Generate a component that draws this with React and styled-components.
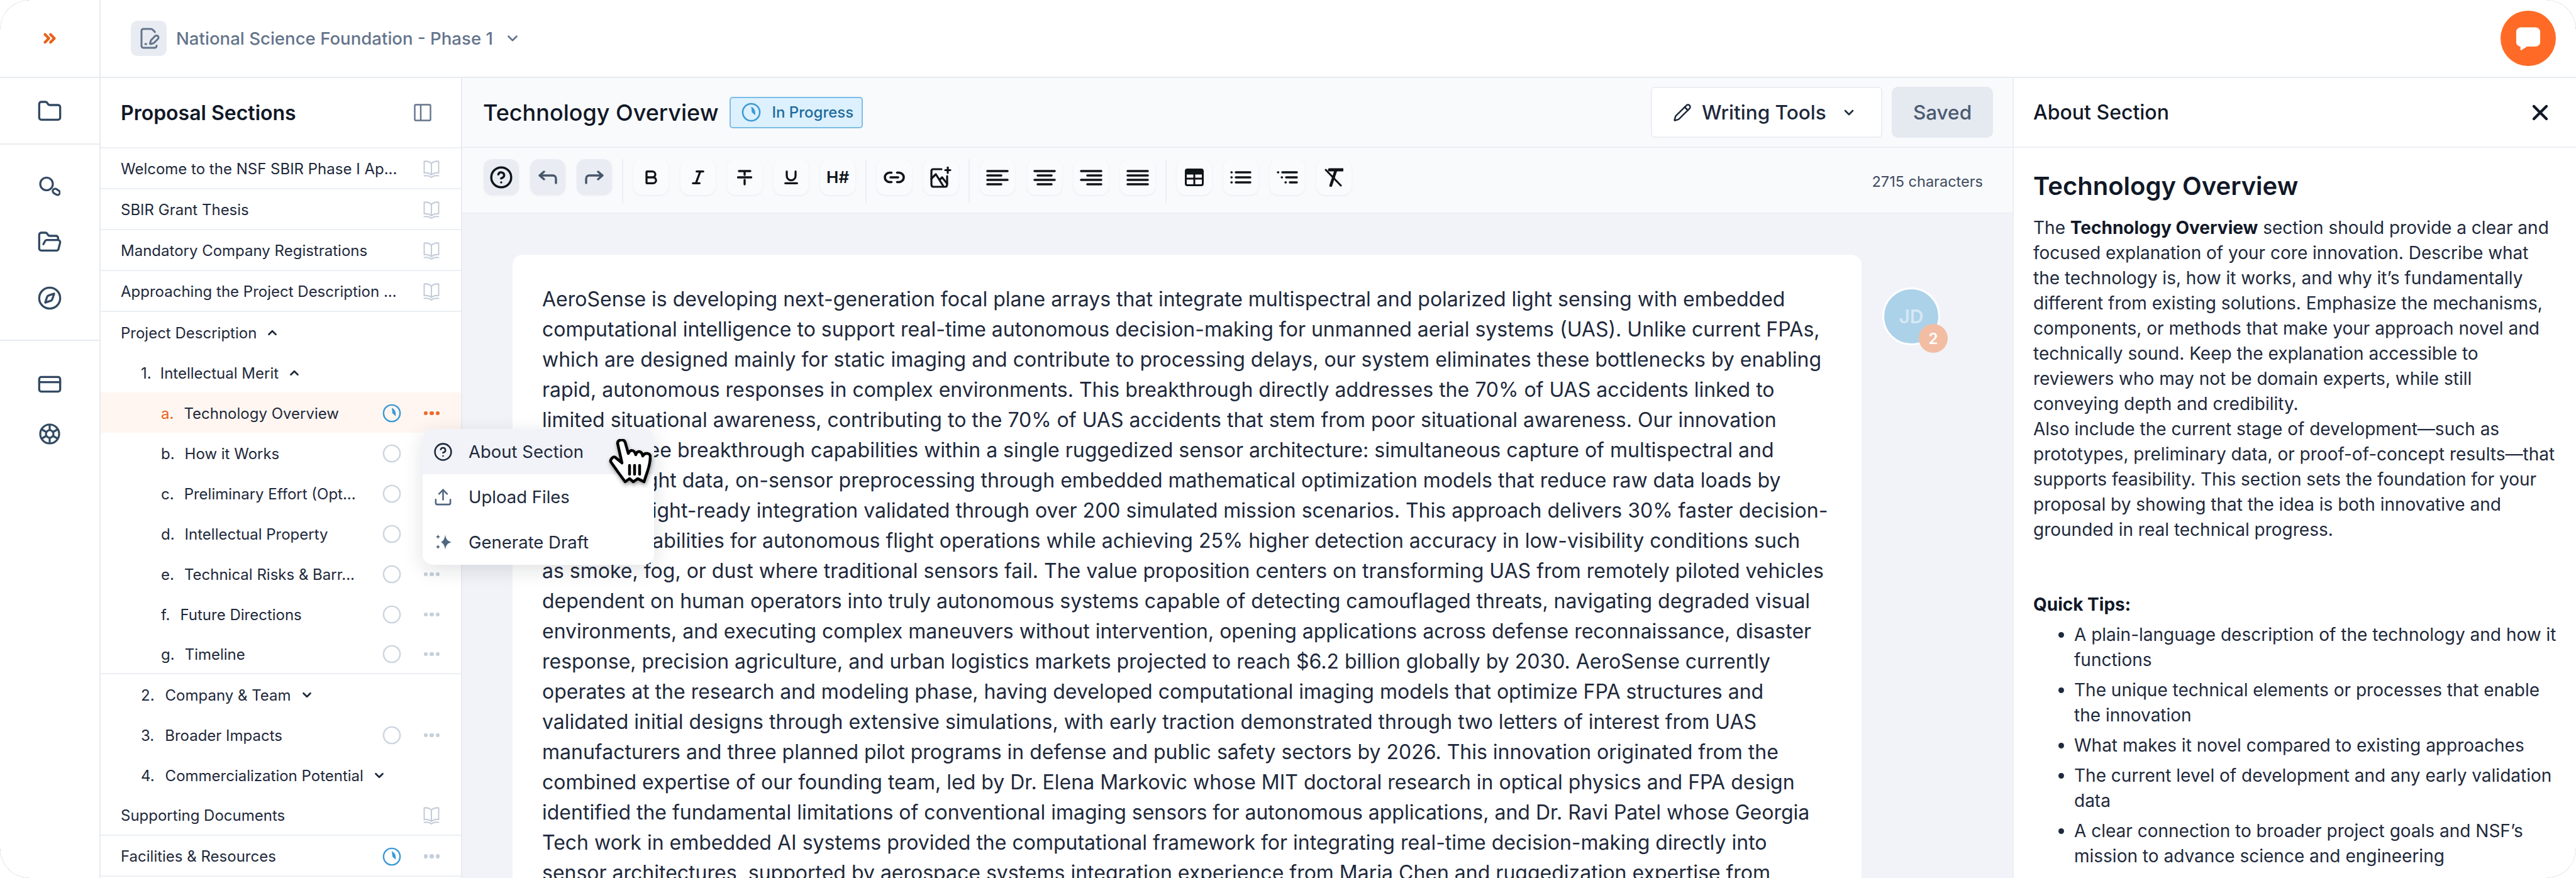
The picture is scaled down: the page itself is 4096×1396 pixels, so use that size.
import React from 'react';
import styled, { createGlobalStyle } from 'styled-components';
import {
  ChevronsRight,
  ChevronDown,
  ChevronUp,
  Folder,
  FolderOpen,
  Compass,
  CreditCard,
  FilePenLine,
  CircleHelp,
  Bold,
  Italic,
  Underline,
  Link2,
  Pencil,
  X,
  Upload,
} from 'lucide-react';

const GlobalStyle = createGlobalStyle`
  html, body {
    margin: 0;
    padding: 0;
    background: #fff;
  }
  * {
    box-sizing: border-box;
  }
  body {
    font-family: Inter, "Noto Sans", sans-serif;
    color: #1e293b;
  }
`;

const Frame = styled.div`
  position: relative;
  width: 4096px;
  height: 1396px;
  overflow: hidden;
  display: grid;
  grid-template-columns: 160px 1fr;
  background: #fff;
`;

const Corner = styled.span`
  position: absolute;
  width: 46px;
  height: 46px;
  z-index: 5;
  border: 0 dotted #c4c8ce;
  ${p => p.$y}: 0;
  ${p => p.$x}: 0;
  border-${p => p.$y}-width: 1px;
  border-${p => p.$x}-width: 1px;
  border-${p => p.$y}-${p => p.$x}-radius: 46px;
`;

const Rail = styled.nav`
  display: flex;
  flex-direction: column;
  border-right: 2px solid #e8ebf0;
  color: #334a63;
`;

const RailTop = styled.div`
  height: 124px;
  display: flex;
  align-items: center;
  justify-content: center;
  border-bottom: 2px solid #e8ebf0;
  color: #e8611a;
`;

const RailGroup = styled.div`
  display: flex;
  flex-direction: column;
  align-items: center;
  height: ${p => p.$height};
  padding-top: ${p => p.$top}px;
  gap: ${p => p.$gap}px;
  border-bottom: ${p => (p.$last ? '0' : '2px solid #e8ebf0')};
`;

const Content = styled.div`
  display: flex;
  flex-direction: column;
  min-width: 0;
  height: 1396px;
`;

const TopBar = styled.header`
  height: 124px;
  flex: none;
  display: flex;
  align-items: center;
  padding-left: 48px;
  border-bottom: 2px solid #e8ebf0;
  position: relative;
`;

const DocBadge = styled.span`
  width: 57px;
  height: 56px;
  border-radius: 10px;
  background: #e8ecf2;
  color: #64748b;
  display: flex;
  align-items: center;
  justify-content: center;
  margin-right: 15px;
`;

const ProjectName = styled.span`
  font-size: 27.6px;
  font-weight: 500;
  color: #64748b;
  margin-right: 18px;
`;

const ChatButton = styled.button`
  position: absolute;
  right: 32px;
  top: 17px;
  width: 88px;
  height: 88px;
  border: 0;
  border-radius: 50%;
  background: #ff6b26;
  display: flex;
  align-items: center;
  justify-content: center;
  padding: 0;
`;

const Body = styled.div`
  position: relative;
  flex: 1;
  display: flex;
  min-height: 0;
`;

const Sidebar = styled.aside`
  width: 575px;
  flex: none;
  border-right: 2px solid #e8ebf0;
  background: #fff;
`;

const SidebarHead = styled.div`
  height: 112px;
  display: flex;
  align-items: center;
  justify-content: space-between;
  padding: 0 47px 0 32px;
  border-bottom: 2px solid #eceff3;
`;

const SidebarTitle = styled.h2`
  margin: 0;
  font-size: 32px;
  font-weight: 600;
  color: #111827;
`;

const Row = styled.div`
  height: ${p => (p.$plain ? 64 : 65)}px;
  display: flex;
  align-items: center;
  padding-left: ${p => 32 + p.$depth * 32}px;
  padding-right: 34px;
  padding-top: 2px;
  font-size: 24px;
  color: #1e293b;
  white-space: nowrap;
  background: ${p => (p.$active ? '#fff6f1' : 'transparent')};
  border-bottom: ${p => (p.$line ? '2px solid #eceff3' : '0')};
`;

const Marker = styled.span`
  margin-right: ${p => p.$gap}px;
  color: ${p => (p.$active ? '#e8611a' : 'inherit')};
`;

const RowCaret = styled.span`
  display: inline-flex;
  margin-left: 14px;
  color: #1e293b;
`;

const RowTail = styled.span`
  margin-left: auto;
  display: flex;
  align-items: center;
  gap: 36px;
`;

const Dots = styled.span`
  display: flex;
  gap: 3px;
  width: 25px;
  i {
    width: 6.5px;
    height: 6.5px;
    border-radius: 50%;
    background: ${p => (p.$active ? '#ea6a2c' : '#c6cfda')};
  }
`;

const Main = styled.main`
  flex: 1;
  min-width: 0;
  display: flex;
  flex-direction: column;
  background: #f1f3f8;
`;

const MainHead = styled.div`
  height: 111px;
  flex: none;
  background: #f9fafc;
  display: flex;
  align-items: center;
  padding: 0 31px 0 33px;
  border-bottom: 2px solid #eceff3;
`;

const MainTitle = styled.h1`
  margin: 0 18px 0 0;
  font-size: 36px;
  font-weight: 500;
  color: #111827;
`;

const StatusBadge = styled.span`
  height: 50px;
  width: 212px;
  display: flex;
  align-items: center;
  gap: 17px;
  padding-left: 17px;
  border: 2px solid #7cbde6;
  border-radius: 5px;
  background: #dcf0fd;
  color: #1d6a9c;
  font-size: 24px;
  font-weight: 500;
`;

const HeadActions = styled.div`
  margin-left: auto;
  display: flex;
  gap: 15px;
`;

const WritingButton = styled.button`
  width: 368px;
  height: 81px;
  background: #fff;
  border: 2px solid #eceef2;
  border-radius: 6px;
  display: flex;
  align-items: center;
  padding-left: 33px;
  font: 500 31.5px Inter, sans-serif;
  color: #1e293b;
`;

const WritingLabel = styled.span`
  margin: 0 24px 0 16px;
`;

const SavedButton = styled.button`
  width: 161px;
  height: 81px;
  border: 0;
  border-radius: 10px;
  background: #e5e9f0;
  color: #4b5a70;
  font: 500 31.5px Inter, sans-serif;
`;

const Toolbar = styled.div`
  height: 105px;
  flex: none;
  background: #f9fafc;
  display: flex;
  align-items: flex-start;
  padding: 18px 47px 0 34px;
  border-bottom: 2px solid #eceff3;
`;

const ToolGroup = styled.div`
  display: flex;
  gap: 18.2px;
`;

const ToolDivider = styled.span`
  width: 2px;
  height: 70px;
  background: #eceff3;
  margin: 0 16px;
`;

const ToolButton = styled.button`
  width: 56px;
  height: 57px;
  padding: 0;
  border: 0;
  border-radius: 14px;
  background: ${p => (p.$filled ? '#e9edf3' : '#fafbfd')};
  box-shadow: 0 1px 3px rgba(30, 41, 59, 0.08);
  color: ${p => p.$color || '#0f1419'};
  display: flex;
  align-items: center;
  justify-content: center;
  font: 600 26px Inter, sans-serif;
`;

const CharCount = styled.span`
  margin-left: auto;
  margin-top: 21px;
  font-size: 23.5px;
  color: #3d4b5f;
`;

const EditorArea = styled.div`
  flex: 1;
  min-height: 0;
  display: flex;
  align-items: flex-start;
  padding: 65px 0 0 80px;
  overflow: hidden;
`;

const EditorCard = styled.article`
  width: 2145px;
  flex: none;
  min-height: 1000px;
  background: #fff;
  border-radius: 16px 16px 0 0;
  padding: 47px 51px 0 47px;
  font-size: 32px;
  line-height: 48px;
  color: #1e293b;
`;

const Avatar = styled.div`
  position: relative;
  margin: 52px 0 0 33px;
  width: 92px;
  height: 92px;
  border-radius: 50%;
  border: 3px solid #fff;
  background: #acd2ea;
  color: rgba(255, 255, 255, 0.5);
  font-size: 30px;
  font-weight: 600;
  display: flex;
  align-items: center;
  justify-content: center;
`;

const AvatarCount = styled.span`
  position: absolute;
  right: -15px;
  bottom: -15px;
  width: 46px;
  height: 46px;
  border-radius: 50%;
  background: #f2bda3;
  color: #fff;
  font-size: 24px;
  font-weight: 600;
  display: flex;
  align-items: center;
  justify-content: center;
`;

const AboutPanel = styled.section`
  width: 896px;
  flex: none;
  background: #fff;
  border-left: 2px solid #eceff3;
  overflow: hidden;
`;

const AboutHead = styled.div`
  height: 111px;
  display: flex;
  align-items: center;
  justify-content: space-between;
  padding: 0 37px 0 31px;
  border-bottom: 2px solid #eceff3;
  font-size: 32px;
  font-weight: 500;
  color: #111827;
`;

const AboutBody = styled.div`
  padding: 36px 32px 0 31px;
  font-size: 28px;
  line-height: 40px;
  color: #1e293b;
`;

const AboutTitle = styled.h3`
  margin: 0 0 21px;
  font-size: 40px;
  line-height: 50px;
  font-weight: 600;
  color: #111827;
`;

const AboutText = styled.p`
  margin: 0;
  strong {
    font-weight: 700;
    color: #111827;
  }
`;

const TipsTitle = styled.p`
  margin: 79px 0 8px;
  font-weight: 700;
  color: #111827;
`;

const TipsList = styled.ul`
  margin: 0 -14px 0 0;
  padding: 0 0 0 65px;
  li {
    margin-bottom: 8px;
  }
`;

const Menu = styled.div`
  position: absolute;
  left: 512px;
  top: 558px;
  width: 368px;
  height: 216px;
  background: #fff;
  border-radius: 16px;
  box-shadow: 0 8px 32px rgba(15, 23, 42, 0.13);
  overflow: hidden;
  z-index: 3;
`;

const MenuItem = styled.div`
  height: 72px;
  display: flex;
  align-items: center;
  gap: 25px;
  padding-left: 17px;
  font-size: 27.5px;
  color: #1e293b;
  background: ${p => (p.$hover ? '#f1f3f8' : 'transparent')};
`;

const MenuIcon = styled.span`
  width: 31px;
  display: flex;
  justify-content: center;
  color: ${p => (p.$dark ? '#1e293b' : '#4f6680')};
`;

const Cursor = styled.svg`
  position: absolute;
  left: 968px;
  top: 698px;
  z-index: 4;
  filter: drop-shadow(1px 3px 3px rgba(0, 0, 0, 0.4));
`;

const BookIcon = () => (
  <svg width="26" height="28" viewBox="0 0 26 28" fill="none" stroke="#c3ccd8" strokeWidth="2" strokeLinejoin="round" strokeLinecap="round">
    <path d="M13 5C10 2 6 1 1.5 1.5V20C6 19.5 10 20.5 13 23C16 20.5 20 19.5 24.5 20V1.5C20 1 16 2 13 5ZM13 5V23" />
    <path d="M1.5 24.5C6 24 10 24.5 13 27C16 24.5 20 24 24.5 24.5" />
  </svg>
);

const StatusIcon = ({ progress, size = 30 }) => (
  <svg width={size} height={size} viewBox="0 0 32 32" fill="none">
    <circle cx="16" cy="16" r="14" stroke={progress ? '#3c9ad4' : '#cdd5df'} strokeWidth="2.6" />
    {progress && <path d="M16 7C21 9 23.5 14 22.5 21L17 16Z" fill="#3c9ad4" />}
  </svg>
);

const PanelIcon = () => (
  <svg width="28" height="28" viewBox="0 0 28 28" fill="none" stroke="#64748b" strokeWidth="2.4">
    <rect x="1.5" y="1.5" width="25" height="25" rx="1.5" />
    <path d="M11 1.5V26.5" />
  </svg>
);

const SearchIcon = () => (
  <svg width="34" height="34" viewBox="0 0 34 34" fill="none" stroke="currentColor" strokeWidth="3.2">
    <circle cx="12" cy="11.5" r="10" />
    <rect x="21.5" y="20" width="12" height="7.5" rx="3.75" transform="rotate(32 27 24)" />
  </svg>
);

const WheelIcon = () => (
  <svg width="34" height="34" viewBox="0 0 34 34" fill="none" stroke="currentColor" strokeWidth="3.2">
    <circle cx="17" cy="17" r="15" />
    <circle cx="17" cy="17" r="6" />
    <path d="M17 2V11M17 23V32M4 9.5L11.8 14M22.2 20L30 24.5M4 24.5L11.8 20M22.2 14L30 9.5" />
  </svg>
);

const ChatIcon = () => (
  <svg width="40" height="39" viewBox="0 0 42 40" fill="#fff">
    <path d="M9 1H33C37 1 41 4 41 8V26C41 30 37 33 33 33H19L10 39C9 39.5 8 39 8 38V33C4 32.5 1 30 1 26V8C1 4 5 1 9 1Z" />
  </svg>
);

const UndoIcon = () => (
  <svg width="30" height="22" viewBox="0 0 30 22" fill="none" stroke="currentColor" strokeWidth="3.4" strokeLinecap="round" strokeLinejoin="round">
    <path d="M9 2L2 8L9 14M2 8H23C26 8 28 10 28 13V20" />
  </svg>
);

const RedoIcon = () => (
  <svg width="30" height="22" viewBox="0 0 30 22" fill="none" stroke="currentColor" strokeWidth="3.4" strokeLinecap="round" strokeLinejoin="round">
    <path d="M21 2L28 8L21 14M28 8H7C4 8 2 10 2 13V20" />
  </svg>
);

const StrikeIcon = () => (
  <svg width="24" height="26" viewBox="0 0 24 26" fill="none" stroke="currentColor" strokeWidth="3.4" strokeLinecap="round">
    <path d="M3 3H21M12 3V9M1.5 13H22.5M12 17V24" />
  </svg>
);

const ImageSparkIcon = () => (
  <svg width="34" height="34" viewBox="0 0 34 34" fill="none" stroke="currentColor" strokeWidth="3.2" strokeLinecap="round" strokeLinejoin="round">
    <path d="M18 4H5C3 4 2 5 2 7V28C2 30.5 3 32 5 32H24C26 32 27 30.5 27 28V15" />
    <path d="M2 19L9 12L21 31M15 21L19 17L27 27" />
    <path d="M28 1V10M24 5.5H32" />
  </svg>
);

const AlignIcon = ({ mode }) => {
  const short = mode === 'justify' ? 34 : 24;
  const xShort = mode === 'left' || mode === 'justify' ? 2 : mode === 'right' ? 12 : 7;
  return (
    <svg width="36" height="26" viewBox="0 0 36 26" fill="none" stroke="currentColor" strokeWidth="3.6" strokeLinecap="round">
      <path d={`M2 3H34M${xShort} 10H${xShort + short - 2}M2 17H34M${xShort} 24H${xShort + short - 2}`} />
    </svg>
  );
};

const TableIcon = () => (
  <svg width="30" height="28" viewBox="0 0 30 28" fill="none" stroke="currentColor" strokeWidth="3">
    <rect x="1.5" y="1.5" width="27" height="25" rx="2.5" />
    <path d="M1.5 6H28.5" strokeWidth="7" />
    <path d="M1.5 16H28.5M15 8V26" />
  </svg>
);

const ListIcon = ({ nested }) => {
  const steps = nested ? [0, 6, 12] : [0, 0, 0];
  return (
    <svg width="34" height="24" viewBox="0 0 34 24" fill="none" stroke="currentColor" strokeWidth="3.4" strokeLinecap="round">
      {steps.map((x, i) => (
        <path key={i} d={`M${2 + x} ${4 + i * 8}H${2.5 + x}M${9 + x} ${4 + i * 8}H32`} />
      ))}
    </svg>
  );
};

const ClearFormatIcon = () => (
  <svg width="30" height="30" viewBox="0 0 30 30" fill="none" stroke="currentColor" strokeLinecap="round">
    <path d="M8 3H29" strokeWidth="5" />
    <path d="M18 4L10 28" strokeWidth="4.5" />
    <path d="M2 3L26 28" strokeWidth="3" />
  </svg>
);

const SparkleIcon = () => (
  <svg width="26" height="26" viewBox="0 0 26 26" fill="currentColor">
    <path d="M16 1C17 8 19 11 26 13C19 15 17 18 16 25C15 18 13 15 9 13C13 11 15 8 16 1Z" />
    <path d="M4.5 1C5 3 6 4 8 4.5C6 5 5 6 4.5 8C4 6 3 5 1 4.5C3 4 4 3 4.5 1Z" />
    <path d="M4.5 17C5 19 6 20 8 20.5C6 21 5 22 4.5 24C4 22 3 21 1 20.5C3 20 4 19 4.5 17Z" />
  </svg>
);

const HandCursor = () => (
  <Cursor width="68" height="72" viewBox="-1 -1 68 72" fill="#fff" stroke="#000" strokeWidth="4.5" strokeLinejoin="round" strokeLinecap="round">
    <path d="M25 67L14 52L2 35C1 32 6 26 9 28L20 37L13 6C13 0 22 -2 25 4L30 22C33 16 39 15 42 24C44 17 51 17 53 26C56 20 65 21 65 27C65 38 62 46 60 52L55 67L45 62L38 67L32 62Z" />
    <path d="M32 41V55M40 41V55M48 41V55" fill="none" />
  </Cursor>
);

const SECTIONS_TOP = [
  'Welcome to the NSF SBIR Phase I Ap...',
  'SBIR Grant Thesis',
  'Mandatory Company Registrations',
  'Approaching the Project Description ...',
];

const SUB_ROWS = [
  { mark: 'a.', label: 'Technology Overview', active: true, progress: true },
  { mark: 'b.', label: 'How it Works' },
  { mark: 'c.', label: 'Preliminary Effort (Opt...' },
  { mark: 'd.', label: 'Intellectual Property' },
  { mark: 'e.', label: 'Technical Risks & Barr...' },
  { mark: 'f.', label: 'Future Directions' },
  { mark: 'g.', label: 'Timeline' },
];

const Tail = ({ progress, active }) => (
  <RowTail>
    <StatusIcon progress={progress} />
    <Dots $active={active}><i /><i /><i /></Dots>
  </RowTail>
);

const SectionList = () => (
  <>
    {SECTIONS_TOP.map(label => (
      <Row key={label} $depth={0} $line>
        {label}
        <RowTail><BookIcon /></RowTail>
      </Row>
    ))}
    <Row $depth={0} $plain>
      Project Description
      <RowCaret><ChevronUp size={22} strokeWidth={3} /></RowCaret>
    </Row>
    <Row $depth={1} $plain>
      <Marker $gap={14}>1.</Marker>Intellectual Merit
      <RowCaret><ChevronUp size={22} strokeWidth={3} /></RowCaret>
    </Row>
    {SUB_ROWS.map(row => (
      <Row key={row.mark} $depth={2} $plain $active={row.active} $line={row.mark === 'g.'}>
        <Marker $gap={16} $active={row.active}>{row.mark}</Marker>
        {row.label}
        <Tail progress={row.progress} active={row.active} />
      </Row>
    ))}
    <Row $depth={1} $plain>
      <Marker $gap={17}>2.</Marker>Company &amp; Team
      <RowCaret><ChevronDown size={22} strokeWidth={3} /></RowCaret>
    </Row>
    <Row $depth={1} $plain>
      <Marker $gap={17}>3.</Marker>Broader Impacts
      <Tail />
    </Row>
    <Row $depth={1} $plain>
      <Marker $gap={17}>4.</Marker>Commercialization Potential
      <RowCaret><ChevronDown size={22} strokeWidth={3} /></RowCaret>
    </Row>
    <Row $depth={0} $line>
      Supporting Documents
      <RowTail><BookIcon /></RowTail>
    </Row>
    <Row $depth={0} $line>
      Facilities &amp; Resources
      <Tail progress />
    </Row>
  </>
);

const EDITOR_TEXT = `AeroSense is developing next-generation focal plane arrays that integrate multispectral and polarized light sensing with embedded computational intelligence to support real-time autonomous decision-making for unmanned aerial systems (UAS). Unlike current FPAs, which are designed mainly for static imaging and contribute to processing delays, our system eliminates these bottlenecks by enabling rapid, autonomous responses in complex environments. This breakthrough directly addresses the 70% of UAS accidents linked to limited situational awareness, contributing to the 70% of UAS accidents that stem from poor situational awareness. Our innovation delivers three breakthrough capabilities within a single ruggedized sensor architecture: simultaneous capture of multispectral and polarized light data, on-sensor preprocessing through embedded mathematical optimization models that reduce raw data loads by 80%, and flight-ready integration validated through over 200 simulated mission scenarios. This approach delivers 30% faster decision-making capabilities for autonomous flight operations while achieving 25% higher detection accuracy in low-visibility conditions such as\u00a0smoke, fog, or dust where traditional sensors fail. The value proposition centers on transforming UAS from remotely piloted vehicles dependent on human operators into truly autonomous systems capable of detecting camouflaged threats, navigating degraded visual environments, and executing complex maneuvers without intervention, opening applications across defense reconnaissance, disaster response, precision agriculture, and urban logistics markets projected to reach $6.2 billion globally by 2030. AeroSense currently operates at the research and modeling phase, having developed computational imaging models that optimize FPA structures and validated initial designs through extensive simulations, with early traction demonstrated through two letters of interest from UAS manufacturers and three planned pilot programs in defense and public safety sectors by 2026. This innovation originated from the combined expertise of our founding team, led by Dr. Elena Markovic whose MIT doctoral research in optical physics and FPA design identified the fundamental limitations of conventional imaging sensors for autonomous applications, and Dr. Ravi Patel whose Georgia Tech work in embedded AI systems provided the computational framework for integrating real-time decision-making directly into sensor architectures, supported by aerospace systems integration experience from Maria Chen and ruggedization expertise from`;

const TIPS = [
  'A plain-language description of the technology and how it functions',
  'The unique technical elements or processes that enable the innovation',
  'What makes it novel compared to existing approaches',
  'The current level of development and any early validation data',
  'A clear connection to broader project goals and NSF’s mission to advance science and engineering',
];

const App = () => (
  <Frame>
    <GlobalStyle />
    <Corner $y="top" $x="left" />
    <Corner $y="top" $x="right" />
    <Corner $y="bottom" $x="left" />
    <Corner $y="bottom" $x="right" />

    <Rail>
      <RailTop><ChevronsRight size={30} strokeWidth={3.4} /></RailTop>
      <RailGroup $height="106px" $top={33} $gap={0}>
        <Folder size={40} strokeWidth={2} />
      </RailGroup>
      <RailGroup $height="312px" $top={51} $gap={49.5}>
        <SearchIcon />
        <FolderOpen size={40} strokeWidth={2} />
        <Compass size={40} strokeWidth={2} />
      </RailGroup>
      <RailGroup $top={49} $gap={42} $last>
        <CreditCard size={40} strokeWidth={2} />
        <WheelIcon />
      </RailGroup>
    </Rail>

    <Content>
      <TopBar>
        <DocBadge><FilePenLine size={36} strokeWidth={2} /></DocBadge>
        <ProjectName>National Science Foundation - Phase 1</ProjectName>
        <ChevronDown size={26} color="#64748b" strokeWidth={2.5} />
        <ChatButton aria-label="Chat"><ChatIcon /></ChatButton>
      </TopBar>

      <Body>
        <Sidebar>
          <SidebarHead>
            <SidebarTitle>Proposal Sections</SidebarTitle>
            <PanelIcon />
          </SidebarHead>
          <SectionList />
        </Sidebar>

        <Menu>
          <MenuItem $hover><MenuIcon $dark><CircleHelp size={31} strokeWidth={2} /></MenuIcon>About Section</MenuItem>
          <MenuItem><MenuIcon><Upload size={31} strokeWidth={2} /></MenuIcon>Upload Files</MenuItem>
          <MenuItem><MenuIcon><SparkleIcon /></MenuIcon>Generate Draft</MenuItem>
        </Menu>

        <Main>
          <MainHead>
            <MainTitle>Technology Overview</MainTitle>
            <StatusBadge><StatusIcon progress size={31} />In Progress</StatusBadge>
            <HeadActions>
              <WritingButton>
                <Pencil size={30} strokeWidth={2} />
                <WritingLabel>Writing Tools</WritingLabel>
                <ChevronDown size={24} strokeWidth={2.6} />
              </WritingButton>
              <SavedButton>Saved</SavedButton>
            </HeadActions>
          </MainHead>

          <Toolbar>
            <ToolGroup>
              <ToolButton $filled><CircleHelp size={38} strokeWidth={2.2} /></ToolButton>
              <ToolButton $filled $color="#475569"><UndoIcon /></ToolButton>
              <ToolButton $filled $color="#475569"><RedoIcon /></ToolButton>
            </ToolGroup>
            <ToolDivider />
            <ToolGroup>
              <ToolButton><Bold size={28} strokeWidth={2.8} /></ToolButton>
              <ToolButton><Italic size={28} strokeWidth={2.8} /></ToolButton>
              <ToolButton><StrikeIcon /></ToolButton>
              <ToolButton><Underline size={28} strokeWidth={2.8} /></ToolButton>
              <ToolButton>H#</ToolButton>
            </ToolGroup>
            <ToolDivider />
            <ToolGroup>
              <ToolButton><Link2 size={36} strokeWidth={2.4} /></ToolButton>
              <ToolButton><ImageSparkIcon /></ToolButton>
            </ToolGroup>
            <ToolDivider />
            <ToolGroup>
              <ToolButton><AlignIcon mode="left" /></ToolButton>
              <ToolButton><AlignIcon mode="center" /></ToolButton>
              <ToolButton><AlignIcon mode="right" /></ToolButton>
              <ToolButton><AlignIcon mode="justify" /></ToolButton>
            </ToolGroup>
            <ToolDivider />
            <ToolGroup>
              <ToolButton><TableIcon /></ToolButton>
              <ToolButton><ListIcon /></ToolButton>
              <ToolButton><ListIcon nested /></ToolButton>
              <ToolButton><ClearFormatIcon /></ToolButton>
            </ToolGroup>
            <CharCount>2715 characters</CharCount>
          </Toolbar>

          <EditorArea>
            <EditorCard>{EDITOR_TEXT}</EditorCard>
            <Avatar>JD<AvatarCount>2</AvatarCount></Avatar>
          </EditorArea>
        </Main>

        <AboutPanel>
          <AboutHead>
            About Section
            <X size={40} strokeWidth={2.6} color="#111827" />
          </AboutHead>
          <AboutBody>
            <AboutTitle>Technology Overview</AboutTitle>
            <AboutText>
              The <strong>Technology Overview</strong> section should provide a clear and focused explanation of your core innovation. Describe what the technology is, how it works, and why it’s fundamentally different from existing solutions. Emphasize the mechanisms, components, or methods that make your approach novel and technically sound. Keep the explanation accessible to reviewers who may not be domain experts, while still conveying depth and credibility.
              <br />
              Also include the current stage of development—such as prototypes, preliminary data, or proof-of-concept results—that supports feasibility. This section sets the foundation for your proposal by showing that the idea is both innovative and grounded in real technical progress.
            </AboutText>
            <TipsTitle>Quick Tips:</TipsTitle>
            <TipsList>
              {TIPS.map(tip => <li key={tip}>{tip}</li>)}
            </TipsList>
          </AboutBody>
        </AboutPanel>
      </Body>
    </Content>

    <HandCursor />
  </Frame>
);

export default App;
